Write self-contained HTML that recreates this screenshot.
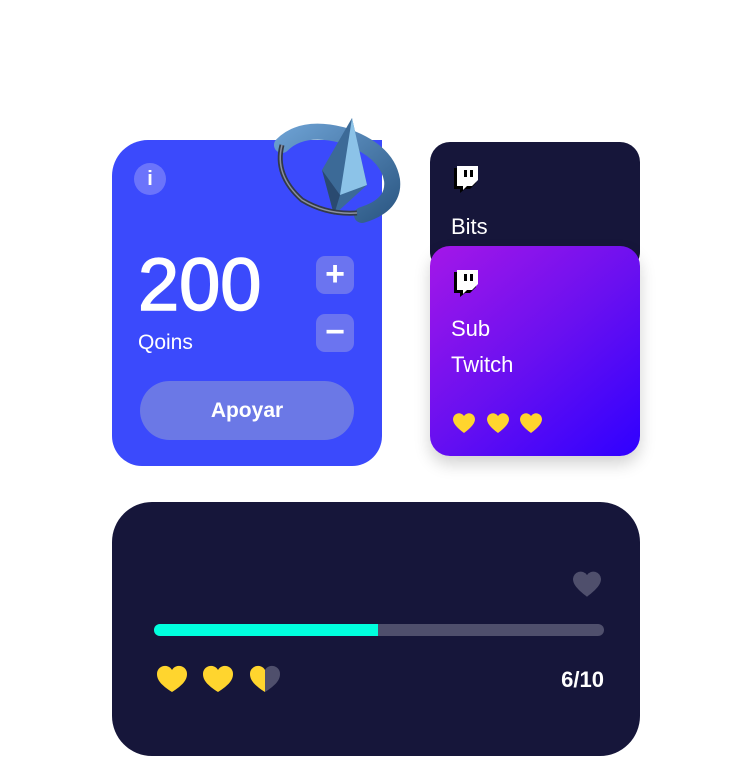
<!DOCTYPE html>
<html><head><meta charset="utf-8"><style>
*{margin:0;padding:0;box-sizing:border-box}
body{width:750px;height:778px;background:#fff;font-family:"Liberation Sans",sans-serif;position:relative;overflow:hidden}
.abs{position:absolute}
.blue{left:112px;top:140px;width:270px;height:326px;background:#3b4afc;border-radius:36px 0 30px 30px}
.info{left:134px;top:163px;width:32px;height:32px;border-radius:50%;background:#6b74fb;color:#fff;font-weight:bold;font-size:20px;text-align:center;line-height:32px}
.num{left:138px;top:245px;color:#fff;font-size:74px;line-height:80px;-webkit-text-stroke:1.5px #fff}
.qo{left:138px;top:331px;color:#fff;font-size:21px}
.sq{left:316px;width:38px;height:38px;border-radius:9px;background:#6b74f0;color:#fff;font-size:34px;font-weight:bold;text-align:center;line-height:36px}
.btn{left:140px;top:381px;width:214px;height:59px;border-radius:30px;background:#6b78e6;color:#fff;font-size:21px;font-weight:bold;text-align:center;line-height:59px}
.dark{left:430px;top:142px;width:210px;height:130px;background:#16163a;border-radius:20px}
.purp{left:430px;top:246px;width:210px;height:210px;border-radius:20px;background:linear-gradient(140deg,#a417e8 0%,#6a10f0 50%,#2f00ff 100%);box-shadow:0 8px 16px rgba(0,0,0,.18)}
.t{color:#fff;font-size:22px;left:451px}
.bot{left:112px;top:502px;width:528px;height:254px;border-radius:40px;background:#16163a}
</style></head><body>
<div class="abs blue"></div>
<div class="abs info">i</div>
<div class="abs num">200</div>
<div class="abs qo">Qoins</div>
<div class="abs sq" style="top:256px">+</div>
<div class="abs sq" style="top:314px">&minus;</div>
<div class="abs btn">Apoyar</div>
<svg class="abs" style="left:262px;top:115px" width="140" height="120" viewBox="0 0 140 120">
<defs><linearGradient id="r" x1="0" y1="0" x2="1" y2="1"><stop offset="0" stop-color="#6a9ed0"/><stop offset="1" stop-color="#2e5a86"/></linearGradient></defs>
<path d="M20 30 Q40 10 80 20 Q125 35 130 65 Q133 90 100 100" fill="none" stroke="url(#r)" stroke-width="16" stroke-linecap="round"/>
<polygon points="90,3 60,55 72,100 105,70" fill="#3c6a97"/>
<polygon points="90,3 105,70 78,80" fill="#8cc3e8"/>
<polygon points="60,55 78,80 72,100" fill="#2a4a70"/>
<path d="M20 30 Q12 60 40 85 Q65 100 95 98" fill="none" stroke="#333a48" stroke-width="5"/>
<path d="M20 30 Q12 60 40 85 Q65 100 95 98" fill="none" stroke="#8a90a0" stroke-width="1.5"/>
</svg>
<div class="abs dark"></div>
<svg class="abs" style="left:452px;top:165px" width="28" height="28" viewBox="0 0 28 28"><path d="M2 3h22v15l-6 6h-5l-5 4v-4H2z" fill="#000"/><path d="M5 1h21v14l-6 6h-5l-4 4v-4H5z" fill="#fff"/><rect x="12" y="5" width="3" height="7" fill="#000"/><rect x="18" y="5" width="3" height="7" fill="#000"/></svg>
<div class="abs t" style="top:214px">Bits</div>
<div class="abs purp"></div>
<svg class="abs" style="left:452px;top:269px" width="28" height="28" viewBox="0 0 28 28"><path d="M2 3h22v15l-6 6h-5l-5 4v-4H2z" fill="#000"/><path d="M5 1h21v14l-6 6h-5l-4 4v-4H5z" fill="#fff"/><rect x="12" y="5" width="3" height="7" fill="#000"/><rect x="18" y="5" width="3" height="7" fill="#000"/></svg>
<div class="abs t" style="top:316px">Sub</div>
<div class="abs t" style="top:352px">Twitch</div>
<svg class="abs" style="left:452px;top:411px" width="100" height="24" viewBox="0 0 100 24">
<g fill="#ffd52e"><path id="h" d="M12 22C4 16 1 12 1 8A6 6 0 0 1 12 5A6 6 0 0 1 23 8C23 12 20 16 12 22z"/><use href="#h" x="34"/><use href="#h" x="67"/></g></svg>
<div class="abs bot"></div>
<svg class="abs" style="left:570px;top:570px" width="34" height="28" viewBox="0 0 24 22"><path d="M12 21C4 15 1 11 1 7A6 6 0 0 1 12 4A6 6 0 0 1 23 7C23 11 20 15 12 21z" fill="#4f4f6c"/></svg>
<div class="abs" style="left:154px;top:624px;width:450px;height:12px;border-radius:6px;background:#4f4f6c;overflow:hidden"><div style="width:224px;height:12px;background:#00ffde"></div></div>
<svg class="abs" style="left:156px;top:664px" width="130" height="30" viewBox="0 0 130 30">
<path id="b" d="M16 28C5 21 1 16 1 10A8 8 0 0 1 16 6A8 8 0 0 1 31 10C31 16 27 21 16 28z" fill="#ffd52e"/>
<use href="#b" x="46"/>
<path d="M109 28C98 21 94 16 94 10A8 8 0 0 1 109 6z" fill="#ffd52e"/>
<path d="M109 28C120 21 124 16 124 10A8 8 0 0 0 109 6z" fill="#4f4f6c"/>
</svg>
<div class="abs" style="left:540px;top:667px;width:64px;text-align:right;color:#fff;font-weight:bold;font-size:22px">6/10</div>
</body></html>
